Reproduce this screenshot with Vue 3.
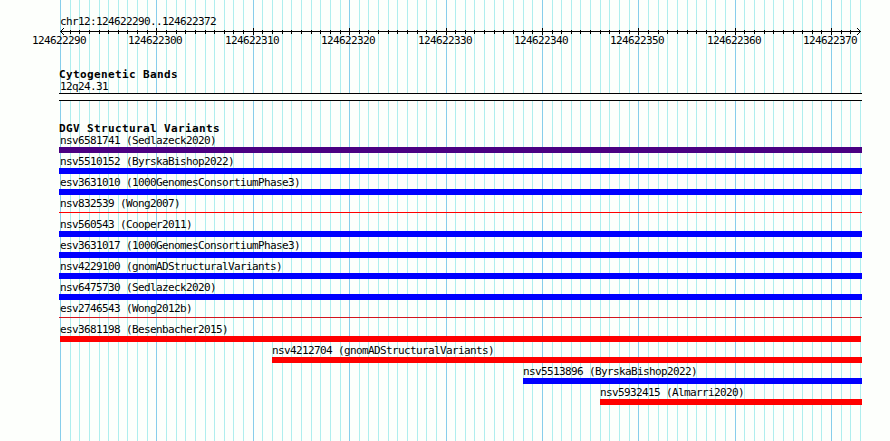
<script setup>
const START = 124622290
const BASES = 83
const WIDTH = 800

const offset = (i) => Math.round((i * WIDTH) / BASES)

const marks = Array.from({ length: BASES + 1 }, (_, i) => ({
  i,
  x: offset(i),
  major: i % 10 === 0,
}))
const labels = marks.filter((m) => m.major).map((m) => ({ x: m.x, text: START + m.i }))

const variants = [
  { name: 'nsv6581741 (Sedlazeck2020)', kind: 'complex', x: 0 },
  { name: 'nsv5510152 (ByrskaBishop2022)', kind: 'gain', x: 0 },
  { name: 'esv3631010 (1000GenomesConsortiumPhase3)', kind: 'gain', x: 0 },
  { name: 'nsv832539 (Wong2007)', kind: 'loss thin', x: 0 },
  { name: 'nsv560543 (Cooper2011)', kind: 'gain', x: 0 },
  { name: 'esv3631017 (1000GenomesConsortiumPhase3)', kind: 'gain', x: 0 },
  { name: 'nsv4229100 (gnomADStructuralVariants)', kind: 'gain', x: 0 },
  { name: 'nsv6475730 (Sedlazeck2020)', kind: 'gain', x: 0 },
  { name: 'esv2746543 (Wong2012b)', kind: 'loss thin dark', x: 0 },
  { name: 'esv3681198 (Besenbacher2015)', kind: 'loss inset', x: 1 },
  { name: 'nsv4212704 (gnomADStructuralVariants)', kind: 'loss', x: 213 },
  { name: 'nsv5513896 (ByrskaBishop2022)', kind: 'gain', x: 464 },
  { name: 'nsv5932415 (Almarri2020)', kind: 'loss', x: 541 },
]
</script>

<template>
  <main class="browser">
    <svg class="grid" width="890" height="441" shape-rendering="crispEdges">
      <rect
        v-for="m in marks"
        :key="m.i"
        :x="60 + m.x"
        y="0"
        width="1"
        height="441"
        :class="m.major ? 'major' : 'minor'"
      />
    </svg>

    <section class="tracks">
      <header class="ruler">
        <div class="text region">chr12:124622290..124622372</div>
        <svg class="axis" width="803" height="9" shape-rendering="crispEdges">
          <rect x="1" y="4" width="801" height="1" />
          <rect
            v-for="m in marks.slice(1, -1)"
            :key="m.i"
            :x="m.x + 1"
            :y="m.major ? 1 : 3"
            width="1"
            :height="m.major ? 7 : 4"
          />
          <path d="M2 3h1v3h-1zM3 2h1v1h-1zM3 6h1v1h-1zM4 1h1v1h-1zM4 7h1v1h-1z" />
          <path d="M800 3h1v3h-1zM799 2h1v1h-1zM799 6h1v1h-1zM798 1h1v1h-1zM798 7h1v1h-1z" />
        </svg>
        <div class="scale">
          <span v-for="l in labels" :key="l.text" class="text tick" :style="{ left: l.x - 27 + 'px' }">{{ l.text }}</span>
        </div>
      </header>

      <section class="bands">
        <h2 class="title">Cytogenetic Bands</h2>
        <div class="text name">12q24.31</div>
        <div class="band"></div>
      </section>

      <section class="variants">
        <h2 class="title">DGV Structural Variants</h2>
        <div v-for="v in variants" :key="v.name" class="variant" :style="{ marginLeft: v.x + 'px' }">
          <div class="text label" :class="{ flush: v.x > 0 }">{{ v.name }}</div>
          <div class="bar" :class="v.kind"></div>
        </div>
      </section>
    </section>
  </main>
</template>

<style>
body {
  background: #fdfffc;
}
</style>

<style scoped>
.browser {
  position: relative;
  width: 890px;
  height: 441px;
  overflow: hidden;
  box-sizing: border-box;
  padding: 15px 28px 0 59px;
  color: #000;
  font-family: "DejaVu Sans Mono", "Liberation Mono", monospace;
}
.grid {
  position: absolute;
  inset: 0;
}
.minor {
  fill: #afeeee;
}
.major {
  fill: #87ceeb;
}
.tracks {
  position: relative;
  width: 803px;
}
.text {
  font-size: 11px;
  line-height: 13px;
  height: 13px;
  letter-spacing: -0.622px;
  white-space: pre;
}
.region {
  padding-left: 1px;
}
.axis {
  display: block;
  margin-top: -1px;
}
.scale {
  position: relative;
  height: 13px;
  margin-top: -2px;
}
.tick {
  position: absolute;
  top: 0;
}
.title {
  margin: 0;
  height: 12px;
  line-height: 13px;
  font-size: 11px;
  font-weight: bold;
  letter-spacing: 0.378px;
  white-space: pre;
}
.bands {
  padding-top: 21px;
}
.name {
  padding-left: 1px;
}
.band {
  box-sizing: border-box;
  height: 8px;
  background: #fdfffc;
  border: solid #000;
  border-width: 1px 0;
}
.variants {
  padding-top: 21px;
}
.variant {
  height: 21px;
}
.label {
  padding-left: 1px;
}
.label.flush {
  padding-left: 0;
}
.bar {
  height: 6px;
}
.complex {
  background: #4b0082;
}
.gain {
  background: #00f;
}
.loss {
  background: #f00;
}
.thin {
  position: relative;
  height: 1px;
  top: 2px;
}
.dark {
  background: #d2141e;
}
.inset {
  margin-right: 1px;
}
</style>
